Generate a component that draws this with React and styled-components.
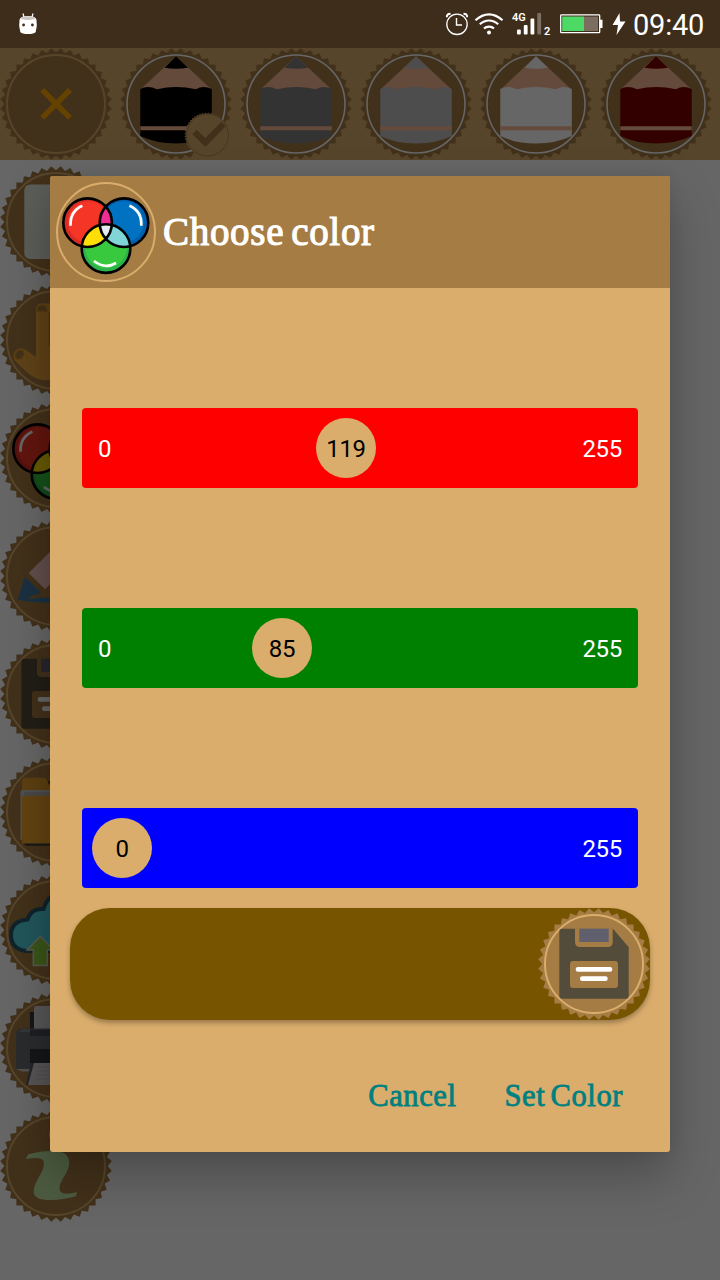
import React, { useId } from 'react';
import styled, { createGlobalStyle } from 'styled-components';

const GlobalStyle = createGlobalStyle`
  * { box-sizing: border-box; }
  body { margin: 0; background: #fff; font-family: Roboto, "Liberation Sans", sans-serif; }
  button { font: inherit; border: 0; padding: 0; background: none; cursor: pointer; }
  svg { display: block; }
`;

const BROWN = '#a57c43';
const SAND = '#daad6c';

const Screen = styled.div`
  position: relative;
  width: 720px;
  height: 1280px;
  overflow: hidden;
  display: flex;
  flex-direction: column;
  background: #fff;
`;

const StatusBar = styled.header`
  position: relative;
  z-index: 2;
  display: flex;
  align-items: center;
  height: 48px;
  flex: none;
  padding: 0 14px 0 18px;
  background: #3e2d1b;
  color: #fff;
`;

const StatusIcons = styled.div`
  display: flex;
  align-items: center;
  margin-left: auto;
`;

const Clock = styled.time`
  font-size: 29px;
  line-height: 48px;
  padding-top: 2px;
  width: 73px;
  letter-spacing: -0.2px;
`;

const Palette = styled.nav`
  display: flex;
  gap: 8px;
  height: 112px;
  flex: none;
  background: ${SAND};
`;

const Tools = styled.nav`
  display: flex;
  flex-direction: column;
  gap: 6px;
  padding-top: 6px;
`;

const IconButton = styled.button`
  position: relative;
  width: 112px;
  height: 112px;
  flex: none;
`;

const Selected = styled.span`
  position: absolute;
  left: 64px;
  top: 64px;
`;

const Scrim = styled.div`
  position: absolute;
  inset: 0;
  z-index: 1;
  padding: 176px 50px 128px;
  background: rgba(0, 0, 0, 0.6);
`;

const Dialog = styled.section`
  display: flex;
  flex-direction: column;
  height: 976px;
  border-radius: 3px;
  background: ${SAND};
  box-shadow: 0 24px 50px rgba(0, 0, 0, 0.26), 0 0 14px rgba(0, 0, 0, 0.07);
`;

const DialogHeader = styled.header`
  display: flex;
  align-items: center;
  height: 112px;
  flex: none;
  border-radius: 3px 3px 0 0;
  background: ${BROWN};
`;

const Title = styled.h1`
  margin: 0 0 0 1px;
  font: 400 39px/50px "Liberation Serif", serif;
  letter-spacing: 0.7px;
  word-spacing: -3.5px;
  color: #fff;
  -webkit-text-stroke: 1.1px #fff;
`;

const Channels = styled.div`
  display: flex;
  flex-direction: column;
  gap: 120px;
  padding: 120px 32px 20px;
`;

const Track = styled.div`
  position: relative;
  display: flex;
  align-items: center;
  justify-content: space-between;
  height: 80px;
  padding: 2px 16px 0;
  border-radius: 4px;
  background: ${(p) => p.$color};
  color: #fff;
  font-size: 24px;
  letter-spacing: -0.3px;
`;

const Thumb = styled.span`
  position: absolute;
  top: 10px;
  width: 60px;
  height: 60px;
  padding-top: 1px;
  border-radius: 50%;
  background: ${SAND};
  color: #000;
  line-height: 60px;
  text-align: center;
`;

const Preview = styled.div`
  display: flex;
  justify-content: flex-end;
  height: 112px;
  margin: 0 20px;
  border-radius: 40px;
  background: #775500;
  box-shadow: 0 3px 5px rgba(0, 0, 0, 0.3);
`;

const Actions = styled.footer`
  display: flex;
  justify-content: flex-end;
  gap: 48px;
  padding: 56px 47px 0 0;
`;

const Action = styled.button`
  && { font: 400 30.5px/40px "Liberation Serif", serif; }
  letter-spacing: ${(p) => p.$spacing}px;
  word-spacing: -3px;
  color: #008080;
  -webkit-text-stroke: 0.8px #008080;
`;

function starPoints(c, outer, inner, teeth) {
  const points = [];
  for (let i = 0; i < teeth * 2; i += 1) {
    const r = i % 2 ? outer : inner;
    const a = (i * Math.PI) / teeth;
    points.push(`${(c + r * Math.cos(a)).toFixed(2)},${(c + r * Math.sin(a)).toFixed(2)}`);
  }
  return points.join(' ');
}

const BADGE = starPoints(56, 56, 51.7, 36);
const MINI_BADGE = starPoints(23, 22.6, 21, 48);

function Badge({ ring = SAND, ringOnTop = false, children }) {
  const circle = <circle cx="56" cy="56" r="49" fill="none" stroke={ring} strokeWidth={ringOnTop ? 1.5 : 2} />;
  return (
    <svg width="112" height="112" viewBox="0 0 112 112">
      <polygon points={BADGE} fill={BROWN} />
      {!ringOnTop && circle}
      {children}
      {ringOnTop && circle}
    </svg>
  );
}

function Pencil({ color }) {
  return (
    <>
      <path d="M56 8.3 92 42H20Z" fill="#fab995" />
      <path d="M56 8.3 68 19.8Q56 21.8 44.5 19.8Z" fill={color} />
      <path d="M20.3 41Q28 37 37 41.3Q56 36.6 76 41.3Q83 36.8 91.8 41V88Q76 95.5 56 95.5T20.3 88Z" fill={color} />
      <path d="M20.3 78.3H91.8V82.3H20.3Z" fill="#fab995" />
    </>
  );
}

function Circles() {
  const id = useId();
  const red = `${id}r`;
  const blue = `${id}b`;
  return (
    <>
      <defs>
        <clipPath id={red}><circle cx="37.6" cy="46.7" r="24.3" /></clipPath>
        <clipPath id={blue}><circle cx="74" cy="46.7" r="24.3" /></clipPath>
      </defs>
      <circle cx="37.6" cy="46.7" r="24.3" fill="#d82d25" />
      <circle cx="38.6" cy="46" r="20.8" fill="#f53626" />
      <circle cx="74" cy="46.7" r="24.3" fill="#005fae" />
      <circle cx="73" cy="46" r="20.8" fill="#0072c1" />
      <circle cx="56" cy="72.6" r="24.3" fill="#2db34b" />
      <circle cx="56" cy="71.4" r="20.8" fill="#39c93f" />
      <circle cx="74" cy="46.7" r="24.3" fill="#ef2d94" clipPath={`url(#${red})`} />
      <circle cx="56" cy="72.6" r="24.3" fill="#ffde08" clipPath={`url(#${red})`} />
      <circle cx="56" cy="72.6" r="24.3" fill="#80d6d7" clipPath={`url(#${blue})`} />
      <g clipPath={`url(#${red})`}>
        <circle cx="56" cy="72.6" r="24.3" fill="#e5ecef" clipPath={`url(#${blue})`} />
      </g>
      <g fill="none" stroke="#000" strokeWidth="2.6">
        <circle cx="37.6" cy="46.7" r="24.3" />
        <circle cx="74" cy="46.7" r="24.3" />
        <circle cx="56" cy="72.6" r="24.3" />
      </g>
      <g fill="none" stroke="#fff" strokeWidth="2.7">
        <path d="M20.5 49.8Q20 35 32.4 29.8" />
        <path d="M79.4 29.8Q92 35 91.3 49.8" />
        <path d="M44 85Q55 93.5 66 87" />
      </g>
    </>
  );
}

function Floppy() {
  return (
    <>
      <path d="M24.3 20.7H75L90.7 39.3V87.7Q90.7 90.7 87.7 90.7H24.3Q21.3 90.7 21.3 87.7V23.7Q21.3 20.7 24.3 20.7Z" fill="#534c3b" />
      <path d="M37 20.2H74.7V34Q74.7 39 69.7 39H42Q37 39 37 34Z" fill={BROWN} />
      <path d="M41.3 20.7H70.7V34H41.3Z" fill="#5f5f6e" />
      <rect x="32" y="53" width="48" height="27" rx="3" fill={BROWN} />
      <rect x="37.7" y="59" width="36.6" height="4.8" rx="2.2" fill="#fff" />
      <rect x="42" y="68.2" width="27.7" height="4.8" rx="2.2" fill="#fff" />
    </>
  );
}

function Page() {
  return <rect x="24.3" y="18.5" width="63.4" height="74.5" rx="6" fill="#e3eadd" />;
}

function Scroll() {
  return (
    <>
      <path d="M36 25Q36 19.5 42 19.5H84V90Q84 96 78 96H44Q36 95.5 29 90L15 77Q12 72 15 67Q20 62 26 66L36 73Z" fill="#eda63c" />
      <path d="M37.5 27V24.5Q38 21.5 42 21.5T46.5 25V27Z" fill={BROWN} stroke="#c98729" strokeWidth="1.5" />
      <ellipse cx="19.5" cy="70.5" rx="3.6" ry="4.6" transform="rotate(35 19.5 70.5)" fill={BROWN} stroke="#c98729" strokeWidth="1.5" />
      <path d="M49.5 28V62" stroke="#b77a25" strokeWidth="1.5" />
    </>
  );
}

function Eraser() {
  return (
    <>
      <path d="M28.7 53 68 14 84 30 45 69.3Z" fill="#f3c4bb" />
      <path d="M25 56.7 41 73 17.7 79.7Z" fill="#427aa5" />
      <path d="M17.7 79.7Q27 76 31 77Q27 80 31 79Q42 76 54 79V82.5Q34 83 17.7 79.7Z" fill="#427aa5" />
    </>
  );
}

function Folder() {
  return (
    <>
      <path d="M22 40V26Q22 21.7 26 21.7H43Q47 21.7 47.5 26L49 29H88V88H22Z" fill="#e99e2c" />
      <path d="M47.5 25.5 50 29H54V25Z" fill="#39352c" />
      <path d="M21.5 34H82V40H24V84H20.5V36Z" fill="#c9c9cb" />
      <path d="M24 36H82V40H24Z" fill="#b4b4b8" />
      <path d="M22 86 26 89.8H90V86Z" fill="#3c3c3c" />
      <rect x="22" y="39.7" width="68" height="47.8" rx="2.5" fill="#f4a72c" />
    </>
  );
}

function CloudUpload() {
  return (
    <>
      <path d="M26 77Q11 75 11 61Q11 47 27.5 45.5Q31 34 43.5 35Q50 14 72 20Q84 25 86 43Q101 47 101 61Q100 77 84 77Z" fill="#50d8e2" stroke="#28586d" strokeWidth="4" />
      <path d="M40.2 62.5 54 76H47.3V91.5H33.3V76H27Z" fill="#92d240" stroke="#dcdcca" strokeWidth="1.4" />
    </>
  );
}

function Printer() {
  return (
    <>
      <path d="M30 20H34V38H30Z" fill="#38383d" />
      <rect x="34" y="14" width="44" height="28" rx="3" fill="#d9d6d8" />
      <path d="M16 42Q16 36.5 22 36.5H90Q96 36.5 96 42V77H16Z" fill="#696b72" />
      <path d="M20 38Q24 36 30 37H82V40H18Z" fill="#838489" />
      <path d="M30 37.5H82V44H30Z" fill="#4c4e55" />
      <path d="M16 77H32L30 79.5H22Z" fill="#c8c8ca" />
      <path d="M30 57H82V71H30Z" fill="#36373e" />
      <path d="M31 71H82L88 93H26Z" fill="#595b64" />
      <path d="M34 71H78L84 93H28Z" fill="#d6d2d4" />
      <path d="M37 75H76M37 79H77M36 83H78M36 87H79" stroke="#c4c1c5" strokeWidth="1" />
    </>
  );
}

function Info() {
  return (
    <>
      <path d="M25.7 49 28.3 44.3Q42 40.5 54 41Q69 41 69.2 53C69 63 59.5 70 59.5 78C59.5 85 68 84.5 77 82L76 86.3Q64 90 50 90Q34 90 33.7 81.7C34 71 44 63 44 53Q44 46 25.7 49Z" fill="#bfe3a0" />
      <circle cx="57.5" cy="25" r="8.5" fill="#bfe3a0" />
    </>
  );
}

function CloseMark() {
  return <path d="M42.2 41.8 70 69.8M70 41.8 42.2 69.8" stroke="#ffa500" strokeWidth="5.4" />;
}

function CheckBadge() {
  return (
    <svg width="46" height="46" viewBox="0 0 46 46">
      <polygon points={MINI_BADGE} fill={SAND} />
      <circle cx="23.5" cy="23" r="21" fill="none" stroke={BROWN} strokeWidth="0.8" />
      <path d="M10.5 20 21.3 30.5 39.5 12" fill="none" stroke={BROWN} strokeWidth="6.4" />
    </svg>
  );
}

function DroidIcon() {
  return (
    <svg width="20" height="22" viewBox="0 0 20 22">
      <path d="M5 .5 6.2 5M15 .5 13.8 5" stroke="#fff" strokeWidth="1.2" />
      <path d="M1.5 7Q2 3 10 3T18.5 7Q19.5 13 17.7 19Q16 21 10 21T2.3 19Q.5 13 1.5 7Z" fill="#fff" />
      <path d="M2.5 5.8Q10 8.3 17.5 5.8L16 4Q10 2.5 4 4Z" fill="#ccc7c1" />
      <circle cx="5.6" cy="12" r="1.4" fill="#3e2d1b" />
      <circle cx="14.4" cy="12" r="1.4" fill="#3e2d1b" />
    </svg>
  );
}

function AlarmIcon() {
  return (
    <svg width="24" height="24" viewBox="0 0 24 24" fill="none" stroke="#fff">
      <circle cx="12" cy="12.3" r="10.2" strokeWidth="1.3" />
      <path d="M11.5 6V13H17" strokeWidth="1.4" />
      <path d="M1.8 5.2Q1.8 1.8 5.5 1.8M18.5 1.8Q22.2 1.8 22.2 5.2" strokeWidth="1.9" />
    </svg>
  );
}

function WifiIcon() {
  return (
    <svg width="30" height="24" viewBox="0 0 30 24" fill="none" stroke="#fff" strokeWidth="2.2">
      <path d="M1.5 8.2Q8 2.3 15 2.3T28.5 8.2" />
      <path d="M5.8 12.3Q10 8.5 15 8.5T24.2 12.3" />
      <path d="M10 16.5Q12 14.6 15 14.6T20 16.5" />
      <circle cx="15" cy="20.6" r="2" fill="#fff" stroke="none" />
    </svg>
  );
}

function SignalIcon() {
  return (
    <svg width="40" height="26" viewBox="0 0 40 26" fill="#fff">
      <text x="0" y="10" fontFamily="Roboto, sans-serif" fontWeight="600" fontSize="11">4G</text>
      <rect x="5" y="18.5" width="3.8" height="5" rx="1" />
      <rect x="11.8" y="14" width="3.8" height="9.5" rx="1" />
      <rect x="18.5" y="7.5" width="3.8" height="16" rx="1" />
      <rect x="25.3" y="2" width="3.8" height="21.5" rx="1" opacity="0.32" />
      <text x="32" y="23.6" fontFamily="Roboto, sans-serif" fontWeight="600" fontSize="11">2</text>
    </svg>
  );
}

function BatteryIcon() {
  return (
    <svg width="44" height="20" viewBox="0 0 44 20">
      <rect x="0.7" y="0.9" width="39" height="17.8" rx="0.8" fill="none" stroke="#fff" strokeWidth="1.3" />
      <rect x="2.3" y="2.6" width="35.7" height="14.4" fill="#7b6d60" />
      <rect x="2.3" y="2.6" width="21.7" height="14.4" fill="#4cd964" />
      <rect x="40" y="5.7" width="2.5" height="8.3" fill="#fff" />
    </svg>
  );
}

function BoltIcon() {
  return (
    <svg width="16" height="24" viewBox="0 0 16 24">
      <path d="M8.5 1 1.5 13H7L5.5 23 14.5 9.5H9Z" fill="#fff" />
    </svg>
  );
}

const IconSlot = styled.span`
  margin-right: ${(p) => p.$after}px;
`;

const COLORS = ['#000', '#808080', '#c0c0c0', '#fff', '#800000'];
const TOOLS = [
  ['New', Page],
  ['Scroll', Scroll],
  ['Color', Circles],
  ['Eraser', Eraser],
  ['Save', Floppy],
  ['Open', Folder],
  ['Upload', CloudUpload],
  ['Print', Printer],
  ['About', Info],
];
const CHANNELS = [
  ['red', 119],
  ['green', 85],
  ['blue', 0],
];

function Channel({ color, value }) {
  return (
    <Track $color={color}>
      <span>0</span>
      <span>255</span>
      <Thumb style={{ left: 10 + (value * 480) / 255 }}>{value}</Thumb>
    </Track>
  );
}

export default function App() {
  return (
    <Screen>
      <GlobalStyle />
      <StatusBar>
        <DroidIcon />
        <StatusIcons>
          <IconSlot $after={5}><AlarmIcon /></IconSlot>
          <IconSlot $after={8}><WifiIcon /></IconSlot>
          <IconSlot $after={8}><SignalIcon /></IconSlot>
          <IconSlot $after={7}><BatteryIcon /></IconSlot>
          <IconSlot $after={6}><BoltIcon /></IconSlot>
          <Clock>09:40</Clock>
        </StatusIcons>
      </StatusBar>
      <Palette>
        <IconButton aria-label="Close"><Badge><CloseMark /></Badge></IconButton>
        {COLORS.map((color, i) => (
          <IconButton key={color} aria-label={color}>
            <Badge ring="#fff" ringOnTop><Pencil color={color} /></Badge>
            {i === 0 && <Selected><CheckBadge /></Selected>}
          </IconButton>
        ))}
      </Palette>
      <Tools>
        {TOOLS.map(([label, Icon]) => (
          <IconButton key={label} aria-label={label}><Badge><Icon /></Badge></IconButton>
        ))}
      </Tools>
      <Scrim>
        <Dialog role="dialog" aria-label="Choose color">
          <DialogHeader>
            <Badge><Circles /></Badge>
            <Title>Choose color</Title>
          </DialogHeader>
          <Channels>
            {CHANNELS.map(([color, value]) => <Channel key={color} color={color} value={value} />)}
          </Channels>
          <Preview>
            <IconButton aria-label="Save color"><Badge><Floppy /></Badge></IconButton>
          </Preview>
          <Actions>
            <Action $spacing={0.6}>Cancel</Action>
            <Action $spacing={0.6}>Set Color</Action>
          </Actions>
        </Dialog>
      </Scrim>
    </Screen>
  );
}
